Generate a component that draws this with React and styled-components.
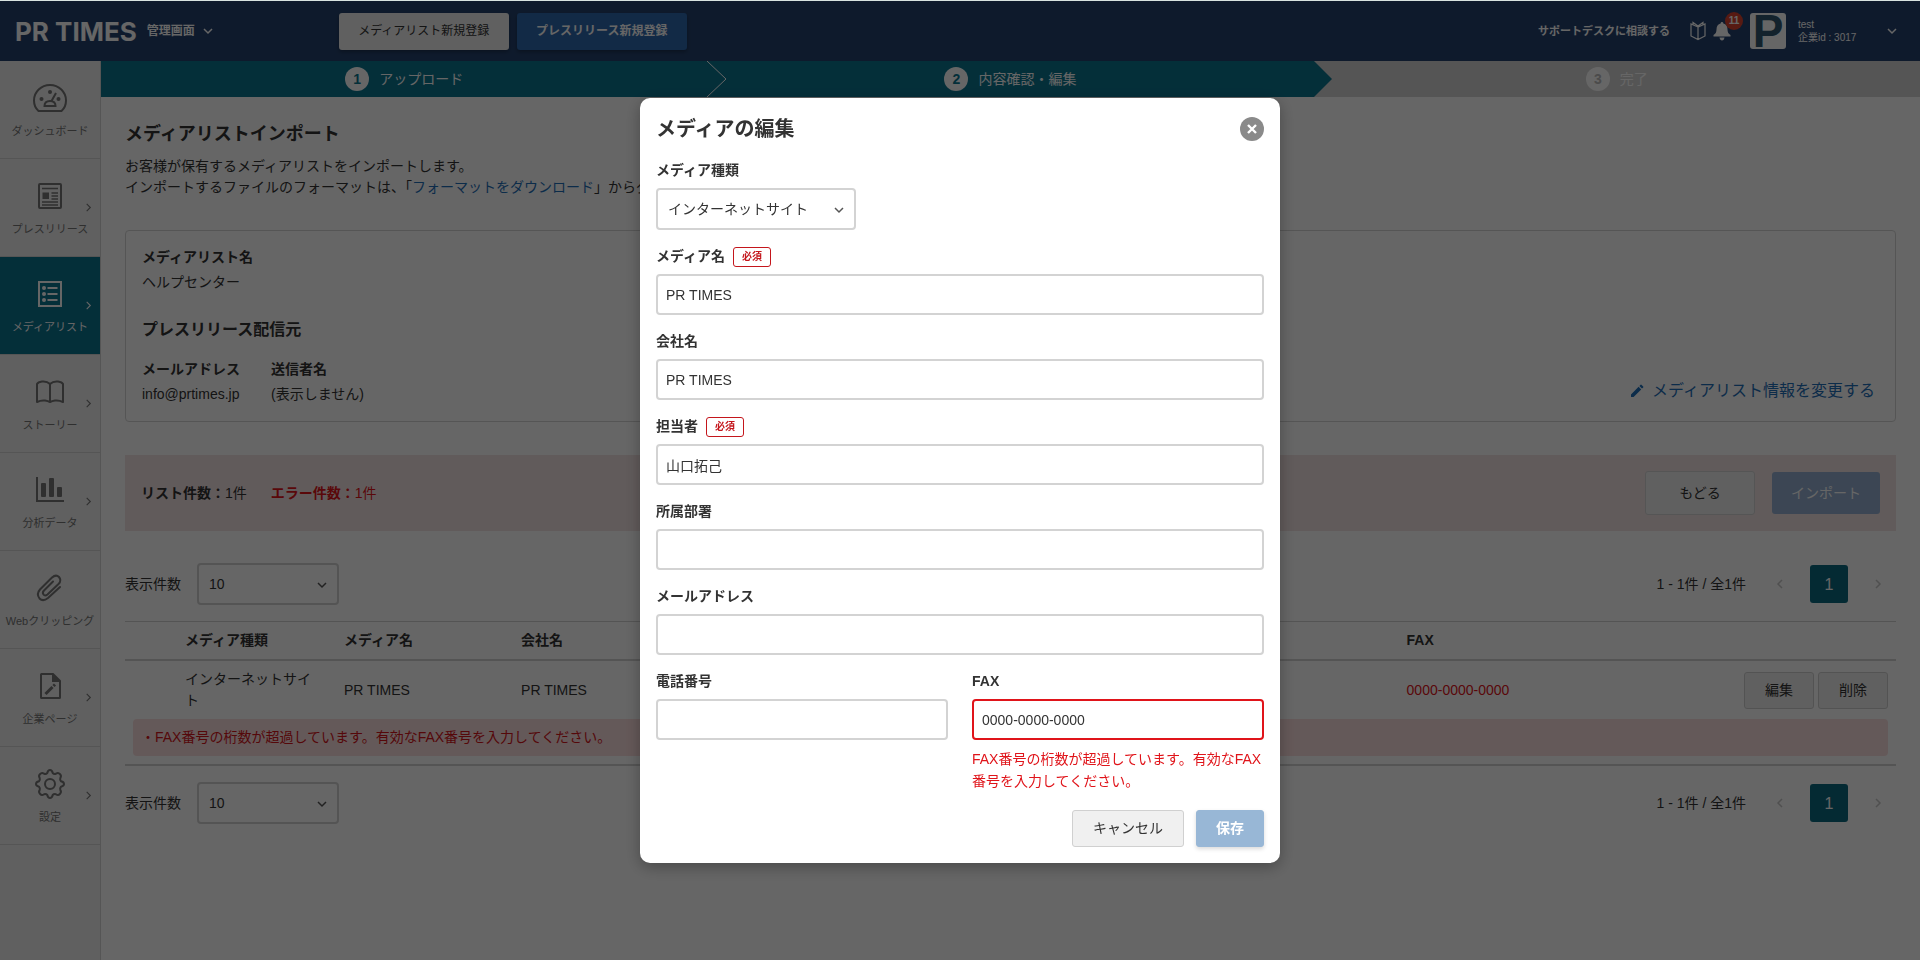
import { useState } from 'react';
import styled, { createGlobalStyle, css } from 'styled-components';

const menu = [
  { label: 'ダッシュボード', icon: DashboardIcon },
  { label: 'プレスリリース', icon: NewsIcon, arrow: true },
  { label: 'メディアリスト', icon: ListIcon, arrow: true, active: true },
  { label: 'ストーリー', icon: BookIcon, arrow: true },
  { label: '分析データ', icon: ChartIcon, arrow: true },
  { label: 'Webクリッピング', icon: ClipIcon },
  { label: '企業ページ', icon: PageIcon, arrow: true },
  { label: '設定', icon: GearIcon, arrow: true },
];

const faxError = 'FAX番号の桁数が超過しています。有効なFAX番号を入力してください。';

export default function App() {
  const [open, setOpen] = useState(true);

  return (
    <>
      <GlobalStyle />
      <Page>
        <Header />
        <Body>
          <Sidebar />
          <Content>
            <Steps />
            <Main>
              <Title>メディアリストインポート</Title>
              <Lead>
                お客様が保有するメディアリストをインポートします。
                <br />
                インポートするファイルのフォーマットは、「<a href="#format">フォーマットをダウンロード</a>
                」からダウンロードしてください。
              </Lead>
              <ListInfo />
              <Summary>
                <Counts>
                  <p>
                    <b>リスト件数：</b>1件
                  </p>
                  <ErrorCount>
                    <b>エラー件数：</b>1件
                  </ErrorCount>
                </Counts>
                <BackButton type="button">もどる</BackButton>
                <ImportButton type="button">インポート</ImportButton>
              </Summary>
              <Pager id="pager-top" />
              <MediaTable onEdit={() => setOpen(true)} />
              <Pager id="pager-bottom" />
            </Main>
          </Content>
        </Body>
      </Page>
      {open && <EditModal onClose={() => setOpen(false)} />}
    </>
  );
}

function Header() {
  return (
    <TopBar>
      <Brand href="#top">PR TIMES</Brand>
      <AdminMenu type="button">
        管理画面
        <Chevron direction="down" size={10} />
      </AdminMenu>
      <HeaderButtons>
        <HeaderButton type="button">メディアリスト新規登録</HeaderButton>
        <HeaderButton type="button" $primary>
          プレスリリース新規登録
        </HeaderButton>
      </HeaderButtons>
      <Support href="#support">サポートデスクに相談する</Support>
      <IconButton type="button" aria-label="ガイド">
        <GuideIcon />
      </IconButton>
      <IconButton type="button" aria-label="お知らせ">
        <BellIcon />
        <Badge>11</Badge>
      </IconButton>
      <CompanyLogo>P</CompanyLogo>
      <Account type="button">
        <span>
          test
          <br />
          企業id : 3017
        </span>
        <Chevron direction="down" size={10} />
      </Account>
    </TopBar>
  );
}

function Sidebar() {
  return (
    <Side>
      {menu.map(({ label, icon: Icon, arrow, active }) => (
        <SideItem key={label} href="#menu" $active={active}>
          <Icon />
          <span>{label}</span>
          {arrow && (
            <SideArrow $active={active}>
              <Chevron direction="right" size={9} thin />
            </SideArrow>
          )}
        </SideItem>
      ))}
    </Side>
  );
}

function Steps() {
  return (
    <StepBar>
      <Step $done>
        <i>1</i>アップロード
        <StepArrow viewBox="0 0 20 36">
          <path d="M0 0L19 18L0 36" fill="none" stroke="#fff" />
        </StepArrow>
      </Step>
      <Step $done>
        <i>2</i>内容確認・編集
        <StepArrow viewBox="0 0 20 36">
          <path d="M0 0L18 18L0 36Z" fill="#0c7590" />
        </StepArrow>
      </Step>
      <Step>
        <i>3</i>完了
      </Step>
    </StepBar>
  );
}

function ListInfo() {
  return (
    <InfoBox>
      <div>
        <InfoLabel>メディアリスト名</InfoLabel>
        <p>ヘルプセンター</p>
        <InfoHeading>プレスリリース配信元</InfoHeading>
        <Sender>
          <div>
            <InfoLabel>メールアドレス</InfoLabel>
            <p>info@prtimes.jp</p>
          </div>
          <div>
            <InfoLabel>送信者名</InfoLabel>
            <p>(表示しません)</p>
          </div>
        </Sender>
      </div>
      <ChangeLink href="#change">
        <svg width="14" height="14" viewBox="0 0 14 14" fill="currentColor">
          <path d="M1 13V10.4L8.6 2.8L11.2 5.4L3.6 13ZM9.4 2L10.6.8Q11 .4 11.4.8L13.2 2.6Q13.6 3 13.2 3.4L12 4.6Z" />
        </svg>
        メディアリスト情報を変更する
      </ChangeLink>
    </InfoBox>
  );
}

function Pager({ id }) {
  return (
    <PagerRow>
      <label htmlFor={id}>表示件数</label>
      <SelectBox $width={142}>
        <select id={id} defaultValue="10">
          <option>10</option>
          <option>20</option>
          <option>50</option>
        </select>
        <Chevron direction="down" size={10} />
      </SelectBox>
      <Range>1 - 1件 / 全1件</Range>
      <PageArrow type="button" aria-label="前へ">
        <Chevron direction="left" size={10} />
      </PageArrow>
      <PageNumber type="button">1</PageNumber>
      <PageArrow type="button" aria-label="次へ">
        <Chevron direction="right" size={10} />
      </PageArrow>
    </PagerRow>
  );
}

function MediaTable({ onEdit }) {
  return (
    <Table>
      <colgroup>
        <col style={{ width: 52 }} />
        <col style={{ width: 159 }} />
        <col style={{ width: '10%' }} />
        <col style={{ width: '10%' }} />
        <col style={{ width: '40%' }} />
        <col />
        <col style={{ width: 168 }} />
      </colgroup>
      <thead>
        <tr>
          <th />
          <th>メディア種類</th>
          <th>メディア名</th>
          <th>会社名</th>
          <th />
          <th>FAX</th>
          <th />
        </tr>
      </thead>
      <tbody>
        <tr>
          <td />
          <td>インターネットサイト</td>
          <td>PR TIMES</td>
          <td>PR TIMES</td>
          <td />
          <FaxCell>0000-0000-0000</FaxCell>
          <ActionCell>
            <RowButtons>
              <Button type="button" onClick={onEdit}>
                編集
              </Button>
              <Button type="button">削除</Button>
            </RowButtons>
          </ActionCell>
        </tr>
        <tr>
          <ErrorCell colSpan={7}>
            <RowError>・{faxError}</RowError>
          </ErrorCell>
        </tr>
      </tbody>
    </Table>
  );
}

function TextField({ id, label, required, value = '', error }) {
  return (
    <Field>
      <Label htmlFor={id}>
        {label}
        {required && <Required>必須</Required>}
      </Label>
      <Input id={id} defaultValue={value} $error={!!error} />
      {error && <FieldError>{error}</FieldError>}
    </Field>
  );
}

function EditModal({ onClose }) {
  return (
    <Overlay>
      <Modal role="dialog" aria-modal="true" aria-labelledby="modal-title">
        <ModalHead>
          <h2 id="modal-title">メディアの編集</h2>
          <CloseButton type="button" aria-label="閉じる" onClick={onClose}>
            <svg width="10" height="10" viewBox="0 0 10 10" stroke="#fff" strokeWidth="2.4">
              <path d="M1 1L9 9M9 1L1 9" />
            </svg>
          </CloseButton>
        </ModalHead>
        <Form>
          <Field>
            <Label htmlFor="type">メディア種類</Label>
            <SelectBox $width={200}>
              <select id="type">
                <option>インターネットサイト</option>
                <option>新聞</option>
                <option>雑誌</option>
              </select>
              <Chevron direction="down" size={10} />
            </SelectBox>
          </Field>
          <TextField id="media" label="メディア名" required value="PR TIMES" />
          <TextField id="company" label="会社名" value="PR TIMES" />
          <TextField id="person" label="担当者" required value="山口拓己" />
          <TextField id="section" label="所属部署" />
          <TextField id="mail" label="メールアドレス" />
          <Columns>
            <TextField id="tel" label="電話番号" />
            <TextField id="fax" label="FAX" value="0000-0000-0000" error={faxError} />
          </Columns>
        </Form>
        <ModalFoot>
          <Button type="button" onClick={onClose}>
            キャンセル
          </Button>
          <SaveButton type="button">保存</SaveButton>
        </ModalFoot>
      </Modal>
    </Overlay>
  );
}

function Chevron({ direction, size, thin }) {
  const paths = {
    down: 'M1 3L5 7L9 3',
    right: 'M3 1L7 5L3 9',
    left: 'M7 1L3 5L7 9',
  };
  return (
    <svg
      width={size}
      height={size}
      viewBox="0 0 10 10"
      fill="none"
      stroke="currentColor"
      strokeWidth={thin ? 1.2 : 1.5}
      overflow="visible"
    >
      <path d={paths[direction]} />
    </svg>
  );
}

function MenuSvg({ children }) {
  return (
    <svg width="36" height="32" viewBox="0 0 36 32" fill="none" stroke="currentColor" strokeWidth="2">
      {children}
    </svg>
  );
}

function DashboardIcon() {
  return (
    <MenuSvg>
      <path d="M6.5 29Q2 25 2 18.500A16 15.500 0 0 1 34 18.500Q34 25 29.500 29Z" strokeLinejoin="round" />
      <g fill="currentColor" stroke="none">
        <circle cx="18" cy="10" r="2" />
        <circle cx="9.500" cy="17" r="2" />
        <circle cx="26.500" cy="17" r="2" />
      </g>
      <path d="M12.500 24H23.500Q23.500 19 18 19Q12.500 19 12.500 24ZM19.500 19L24 11" />
    </MenuSvg>
  );
}

function NewsIcon() {
  return (
    <MenuSvg>
      <rect x="7" y="4" width="22" height="24" rx="1" />
      <path d="M10 8.500H26M19.500 13H26M19.500 16H26M19.500 19H26M10 22H26M10 25H26" strokeWidth="1.500" />
      <rect x="10.500" y="12.500" width="6.500" height="6.500" fill="currentColor" stroke="none" />
    </MenuSvg>
  );
}

function ListIcon() {
  return (
    <MenuSvg>
      <rect x="7" y="4" width="22" height="24" />
      <path d="M15.500 10H25.500M15.500 16H25.500M15.500 22H25.500" />
      <g fill="currentColor" stroke="none">
        <circle cx="12" cy="10" r="2" />
        <circle cx="12" cy="16" r="2" />
        <circle cx="12" cy="22" r="2" />
      </g>
    </MenuSvg>
  );
}

function BookIcon() {
  return (
    <MenuSvg>
      <path
        d="M18 8Q15 5 10 5.500Q6 6 5 8V26Q9 24 13 24.500Q16 25 18 26Q20 25 23 24.500Q27 24 31 26V8Q30 6 26 5.500Q21 5 18 8ZM18 8V26"
        strokeLinejoin="round"
      />
    </MenuSvg>
  );
}

function ChartIcon() {
  return (
    <MenuSvg>
      <path d="M5 3V27H32" />
      <g fill="currentColor" stroke="none">
        <rect x="9" y="9" width="5" height="14" rx="1" />
        <rect x="17" y="4" width="5" height="19" rx="1" />
        <rect x="25" y="13" width="5" height="10" rx="1" />
      </g>
    </MenuSvg>
  );
}

function ClipIcon() {
  return (
    <MenuSvg>
      <path
        d="M28 15L16 26Q11 30 7.500 26.500Q4 22 8 17.500L20 5.500Q24 2 27 5Q30 8.500 26.500 12L15.500 22.500Q13 24.500 11.500 22.500Q10 20.500 12 18.500L21 9.500"
        strokeLinecap="round"
      />
    </MenuSvg>
  );
}

function PageIcon() {
  return (
    <MenuSvg>
      <path d="M9 4.500Q9 4 9.500 4H21L28 11V27.500Q28 28 27.500 28H9.500Q9 28 9 27.500Z" />
      <path d="M20 3V12H29Z" fill="currentColor" stroke="none" />
      <path d="M13.500 24L20.500 17" strokeWidth="3" />
      <path d="M21.500 16L23 14.500" strokeWidth="3" />
    </MenuSvg>
  );
}

function GearIcon() {
  return (
    <MenuSvg>
      <circle cx="18" cy="16" r="5" />
      <path
        d="M15.300 5Q16 2 18 2Q20 2 20.700 5Q22 6.300 23.900 5.700Q26.300 4 27.900 6.100Q29.800 7.900 28.300 10.100Q27.700 12 29 13.300Q32 14 32 16Q32 18 29 18.700Q27.700 20 28.300 21.900Q29.800 24.100 27.900 25.900Q26.300 28 23.900 26.300Q22 25.700 20.700 27Q20 30 18 30Q16 30 15.300 27Q14 25.700 12.100 26.300Q9.700 28 8.100 25.900Q6.200 24.100 7.700 21.900Q8.300 20 7 18.700Q4 18 4 16Q4 14 7 13.300Q8.300 12 7.700 10.100Q6.200 7.900 8.100 6.100Q9.700 4 12.100 5.700Q14 6.300 15.300 5Z"
        strokeLinejoin="round"
      />
    </MenuSvg>
  );
}

function GuideIcon() {
  return (
    <svg width="18" height="20" viewBox="0 0 18 20" fill="none" stroke="#fff" strokeWidth="1.2">
      <path d="M9 6L2 3V15L9 18.500L16 15V3ZM9 6V18M4 3.500V1.500L9 5L14 1.500V3.500" />
    </svg>
  );
}

function BellIcon() {
  return (
    <svg width="18" height="20" viewBox="0 0 18 20" fill="#fff">
      <path d="M9 1Q10.300 1 10.400 2.400Q14.500 3.500 14.500 8.500Q14.500 12.500 17.500 14V15.500H.5V14Q3.500 12.500 3.500 8.500Q3.500 3.500 7.600 2.400Q7.700 1 9 1ZM6.500 16.500H11.500Q11 19.500 9 19.500Q7 19.500 6.500 16.500Z" />
    </svg>
  );
}

const GlobalStyle = createGlobalStyle`
  * {
    box-sizing: border-box;
  }
  body {
    margin: 0;
    background: #fff;
    color: #333;
    font-family: 'Liberation Sans', 'Noto Sans CJK JP', sans-serif;
    font-size: 14px;
    line-height: 21px;
  }
  h1, h2, h3, p {
    margin: 0;
  }
  button, input, select {
    font: inherit;
    color: inherit;
  }
  button {
    padding: 0;
    border: 0;
    background: none;
    cursor: pointer;
  }
  a {
    color: #1f6fb8;
    text-decoration: none;
  }
  svg {
    flex-shrink: 0;
  }
`;

const Page = styled.div`
  display: flex;
  flex-direction: column;
  min-height: 100vh;
  border-top: 1px solid #d8e3e0;
`;

const TopBar = styled.header`
  display: flex;
  align-items: center;
  height: 60px;
  padding: 0 23px 0 15px;
  background: #25436f;
  color: #fff;
`;

const Brand = styled.a`
  color: #fff;
  font-family: Inter, sans-serif;
  font-size: 26px;
  font-weight: 700;
  white-space: nowrap;
`;

const AdminMenu = styled.button`
  display: flex;
  align-items: center;
  gap: 8px;
  margin-left: 10px;
  font-size: 12px;
  font-weight: 700;
  white-space: nowrap;
`;

const HeaderButtons = styled.div`
  display: flex;
  gap: 8px;
  margin: 0 auto 0 126px;
`;

const HeaderButton = styled.button`
  width: 170px;
  height: 37px;
  border-radius: 3px;
  background: ${({ $primary }) => ($primary ? '#2d69b0' : '#f0f0f0')};
  color: ${({ $primary }) => ($primary ? '#fff' : '#333')};
  font-size: 12px;
  font-weight: ${({ $primary }) => ($primary ? 700 : 400)};
  box-shadow: 0 2px 4px rgba(0, 0, 0, 0.3);
`;

const Support = styled.a`
  margin-right: 19px;
  color: #fff;
  font-size: 11px;
  font-weight: 700;
`;

const IconButton = styled.button`
  position: relative;
  display: flex;
  margin-right: 6px;
`;

const Badge = styled.span`
  position: absolute;
  top: -9px;
  left: 12px;
  width: 18px;
  height: 18px;
  border-radius: 9px;
  background: #d9432f;
  font-size: 10px;
  font-weight: 700;
  line-height: 18px;
`;

const CompanyLogo = styled.div`
  display: flex;
  align-items: center;
  justify-content: center;
  width: 36px;
  height: 36px;
  margin-left: 13px;
  border-radius: 3px;
  background: #fff;
  color: #31566f;
  font-size: 46px;
  font-weight: 700;
`;

const Account = styled.button`
  display: flex;
  align-items: center;
  justify-content: space-between;
  width: 99px;
  margin-left: 12px;
  font-size: 10px;
  line-height: 13px;
  text-align: left;
`;

const Body = styled.div`
  display: flex;
  flex: 1;
`;

const Side = styled.nav`
  width: 101px;
  flex-shrink: 0;
  border-right: 1px solid #d5d5d5;
  background: #efefef;
`;

const SideItem = styled.a`
  position: relative;
  display: flex;
  flex-direction: column;
  align-items: center;
  gap: 10px;
  height: 98px;
  padding-top: 21px;
  border-bottom: 1px solid #d5d5d5;
  background: ${({ $active }) => ($active ? '#0c7590' : 'transparent')};
  color: ${({ $active }) => ($active ? '#fff' : '#757575')};
  font-size: 11px;
  line-height: 14px;
  white-space: nowrap;
`;

const SideArrow = styled.span`
  position: absolute;
  top: 42px;
  right: 7px;
  color: ${({ $active }) => ($active ? '#fff' : '#757575')};
`;

const Content = styled.div`
  flex: 1;
  min-width: 0;
`;

const StepBar = styled.div`
  display: grid;
  grid-template-columns: repeat(3, 1fr);
  height: 36px;
`;

const Step = styled.div`
  position: relative;
  display: flex;
  align-items: center;
  justify-content: center;
  gap: 10px;
  background: ${({ $done }) => ($done ? '#0c7590' : '#d5d5d5')};
  color: #fff;

  i {
    width: 24px;
    height: 24px;
    border-radius: 12px;
    background: #fff;
    color: ${({ $done }) => ($done ? '#0c7590' : '#bbb')};
    font-style: normal;
    font-weight: 700;
    line-height: 24px;
    text-align: center;
  }
`;

const StepArrow = styled.svg`
  position: absolute;
  z-index: 1;
  top: 0;
  left: 100%;
  width: 20px;
  height: 36px;
`;

const Main = styled.main`
  padding: 24px;
`;

const Title = styled.h1`
  font-size: 18px;
  line-height: 27px;
`;

const Lead = styled.p`
  margin-top: 8px;
`;

const InfoBox = styled.section`
  display: flex;
  align-items: flex-end;
  justify-content: space-between;
  margin-top: 32px;
  padding: 16px;
  border: 1px solid #d5d5d5;
  border-radius: 4px;
`;

const InfoLabel = styled.p`
  margin-bottom: 4px;
  font-weight: 700;
`;

const InfoHeading = styled.h3`
  margin: 24px 0 16px;
  font-size: 16px;
  line-height: 26px;
`;

const Sender = styled.div`
  display: flex;
  gap: 31px;
`;

const ChangeLink = styled.a`
  display: flex;
  align-items: center;
  gap: 8px;
  margin: 0 4px 2px 0;
  font-size: 16px;
  line-height: 24px;
`;

const Summary = styled.section`
  display: flex;
  align-items: center;
  margin: 33px 0 32px;
  padding: 16px;
  background: #f3e4e4;
`;

const Counts = styled.div`
  display: flex;
  gap: 24px;
  margin-right: auto;
`;

const ErrorCount = styled.p`
  color: #e0141a;
`;

const BackButton = styled.button`
  width: 110px;
  height: 44px;
  margin-right: 17px;
  border: 1px solid #d5d5d5;
  border-radius: 3px;
  background: #f0f0f0;
`;

const ImportButton = styled.button`
  width: 108px;
  height: 42px;
  border-radius: 3px;
  background: #96b0d2;
  color: #fff;
`;

const PagerRow = styled.div`
  display: flex;
  align-items: center;
`;

const SelectBox = styled.div`
  position: relative;
  width: ${({ $width }) => $width}px;
  height: 42px;
  color: #333;

  ${PagerRow} & {
    margin-left: 16px;
  }

  select {
    width: 100%;
    height: 100%;
    padding: 0 32px 0 10px;
    border: 2px solid #d3d3d3;
    border-radius: 4px;
    background: #fff;
    appearance: none;
  }

  svg {
    position: absolute;
    top: 17px;
    right: 12px;
    color: #555;
    pointer-events: none;
  }
`;

const Range = styled.p`
  margin-left: auto;
  margin-right: 16px;
`;

const PageArrow = styled.button`
  width: 36px;
  color: #c8c8c8;
`;

const PageNumber = styled.button`
  width: 38px;
  height: 38px;
  margin: 0 12px;
  border-radius: 3px;
  background: #0c6a80;
  color: #fff;
  font-size: 16px;
`;

const Table = styled.table`
  width: 100%;
  margin: 16px 0;
  border-collapse: separate;
  border-spacing: 0;
  border-top: 1px solid #d3d3d3;
  border-bottom: 2px solid #d3d3d3;
  table-layout: fixed;

  th,
  td {
    padding: 8px 16px 8px 8px;
    text-align: left;
  }

  th {
    border-bottom: 2px solid #d3d3d3;
  }
`;

const FaxCell = styled.td`
  color: #e0141a;
`;

const ActionCell = styled.td`
  && {
    padding: 0 8px 0 0;
  }
`;

const RowButtons = styled.div`
  display: flex;
  justify-content: flex-end;
  gap: 4px;
`;

const ErrorCell = styled.td`
  && {
    padding: 0 8px 8px;
  }
`;

const RowError = styled.p`
  padding: 8px;
  border-radius: 4px;
  background: #fbdede;
  color: #d4141a;
`;

const Button = styled.button`
  height: 37px;
  padding: 0 20px;
  border: 1px solid #d0d0d0;
  border-radius: 3px;
  background: #f0f0f0;

  ${RowButtons} & {
    width: 70px;
    padding: 0;
  }
`;

const SaveButton = styled(Button)`
  width: 68px;
  padding: 0;
  border-color: #98b7d6;
  background: #98b7d6;
  color: #fff;
  font-weight: 700;
  box-shadow: 0 2px 4px rgba(0, 0, 0, 0.15);
`;

const Overlay = styled.div`
  position: fixed;
  z-index: 10;
  inset: 1px 0 0;
  display: flex;
  align-items: center;
  justify-content: center;
  background: rgba(0, 0, 0, 0.6);
`;

const Modal = styled.div`
  width: 640px;
  max-width: 100%;
  padding: 16px;
  border-radius: 10px;
  background: #fff;
  box-shadow: 0 4px 16px rgba(0, 0, 0, 0.3);
`;

const ModalHead = styled.div`
  display: flex;
  align-items: center;
  justify-content: space-between;
  margin-bottom: 16px;

  h2 {
    font-size: 20px;
    line-height: 30px;
  }
`;

const CloseButton = styled.button`
  display: flex;
  align-items: center;
  justify-content: center;
  width: 24px;
  height: 24px;
  border-radius: 12px;
  background: #8a8a8a;
`;

const Form = styled.form`
  display: flex;
  flex-direction: column;
  gap: 16px;
`;

const Field = styled.div`
  display: flex;
  flex-direction: column;
`;

const Columns = styled.div`
  display: grid;
  grid-template-columns: 1fr 1fr;
  gap: 24px;
`;

const Label = styled.label`
  display: flex;
  align-items: center;
  gap: 8px;
  height: 21px;
  margin-bottom: 7px;
  font-weight: 700;
`;

const Required = styled.span`
  padding: 0 8px;
  border: 1px solid #c4161c;
  border-radius: 3px;
  color: #c4161c;
  font-size: 10px;
  line-height: 18px;
`;

const Input = styled.input`
  width: 100%;
  height: 41px;
  padding: 0 8px;
  border: 2px solid #d3d3d3;
  border-radius: 4px;
  background: #fff;

  ${({ $error }) =>
    $error &&
    css`
      border-color: #e0141a;
    `}
`;

const FieldError = styled.p`
  margin-top: 8px;
  color: #e0141a;
  line-height: 22px;
`;

const ModalFoot = styled.div`
  display: flex;
  justify-content: flex-end;
  gap: 12px;
  margin-top: 18px;
`;
